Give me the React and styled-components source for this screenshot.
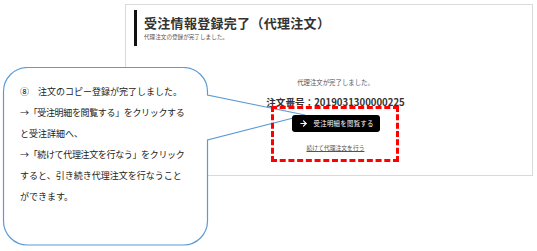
import React from 'react'
import styled, { createGlobalStyle } from 'styled-components'
import { ArrowRight } from 'lucide-react'

const GlobalStyle = createGlobalStyle`
  html, body {
    margin: 0;
    padding: 0;
    background: #fff;
  }
  body {
    font-family: "Noto Sans CJK JP", "Noto Sans", sans-serif;
    color: #333;
  }
`

const calloutLines = [
    '⑧\u3000注文のコピー登録が完了しました。',
    '→「受注明細を閲覧する」をクリックする',
    'と受注詳細へ、',
    '→「続けて代理注文を行なう」をクリック',
    'すると、引き続き代理注文を行なうこと',
    'ができます。',
]

const App = () => {
    return (
        <Page>
            <GlobalStyle />
            <Panel>
                <Header>
                    <Title>受注情報登録完了（代理注文）</Title>
                    <Subtitle>代理注文の登録が完了しました。</Subtitle>
                </Header>
                <Body>
                    <Message>代理注文が完了しました。</Message>
                    <OrderNo>注文番号：2019031300000225</OrderNo>
                    <ViewButton>
                        <ArrowRight size={9} strokeWidth={3.2} />
                        <span>受注明細を閲覧する</span>
                    </ViewButton>
                    <ContinueLink href="#">続けて代理注文を行う</ContinueLink>
                </Body>
            </Panel>

            <Highlight />

            <Callout>
                <svg width="310" height="180" viewBox="0 0 310 180">
                    <path
                        d="M27.5 0.5 H183.5 A24 24 0 0 1 207.5 24.5 V28 L305 48 L207.5 73 V154 A24 24 0 0 1 183.5 178 H27.5 A24 24 0 0 1 3.5 154 V24.5 A24 24 0 0 1 27.5 0.5 Z"
                        fill="#fff"
                        stroke="#5b9bd5"
                        strokeWidth="1.2"
                    />
                </svg>
                <CalloutText>
                    {calloutLines.map((line, i) => (
                        <CalloutLine key={i} $tight={line.startsWith('→')}>{line}</CalloutLine>
                    ))}
                </CalloutText>
            </Callout>
        </Page>
    )
}

const Page = styled.div`
  position: relative;
  width: 537px;
  height: 251px;
  overflow: hidden;
  background: #fff;
`

const Panel = styled.div`
  box-sizing: border-box;
  margin: 4px 4px 0 125px;
  height: 172px;
  border: 1px solid #d9d9d9;
  display: flex;
  flex-direction: column;
`

const Header = styled.div`
  margin: 5px 0 0 8px;
  height: 36px;
  box-sizing: border-box;
  border-left: 3px solid #111;
  padding: 5px 0 0 7px;
`

const Title = styled.h1`
  margin: 0;
  font-size: 13px;
  line-height: 16px;
  font-weight: 700;
  letter-spacing: 0.3px;
  color: #333;
`

const Subtitle = styled.p`
  margin: 2px 0 0;
  font-size: 5.6px;
  line-height: 8px;
  color: #555;
`

const Body = styled.div`
  display: flex;
  flex-direction: column;
  align-items: center;
  padding-left: 13px;
`

const Message = styled.p`
  margin: 32px 0 0;
  font-size: 6.4px;
  line-height: 10px;
  color: #555;
`

const OrderNo = styled.p`
  margin: 7px 0 0;
  font-size: 9.6px;
  line-height: 14px;
  font-weight: 700;
  color: #333;
`

const ViewButton = styled.button`
  position: relative;
  z-index: 2;
  margin-top: 6px;
  width: 88px;
  height: 17px;
  padding: 0 0 0 7px;
  border: none;
  border-radius: 3px;
  background: #000;
  color: #fff;
  display: flex;
  align-items: center;
  gap: 6px;
  font-family: inherit;
  font-size: 6.4px;
  letter-spacing: 0.3px;
  cursor: pointer;
`

const ContinueLink = styled.a`
  margin-top: 11px;
  font-size: 5.8px;
  line-height: 10px;
  color: #555;
  text-decoration: underline;
`

const Highlight = styled.div`
  position: absolute;
  z-index: 3;
  left: 271px;
  top: 106px;
  width: 128px;
  height: 56px;
  box-sizing: border-box;
  border: 3px dashed #f00;
`

const Callout = styled.div`
  position: absolute;
  z-index: 1;
  left: 0;
  top: 67px;
  width: 310px;
  height: 180px;

  svg {
    position: absolute;
    left: 0;
    top: 0;
  }
`

const CalloutText = styled.div`
  position: relative;
  padding: 14px 0 0 20px;
`

const CalloutLine = styled.div`
  font-size: 9px;
  line-height: 21px;
  color: #222;
  white-space: nowrap;
  letter-spacing: ${p => (p.$tight ? '-0.35px' : '0')};
`

export default App
